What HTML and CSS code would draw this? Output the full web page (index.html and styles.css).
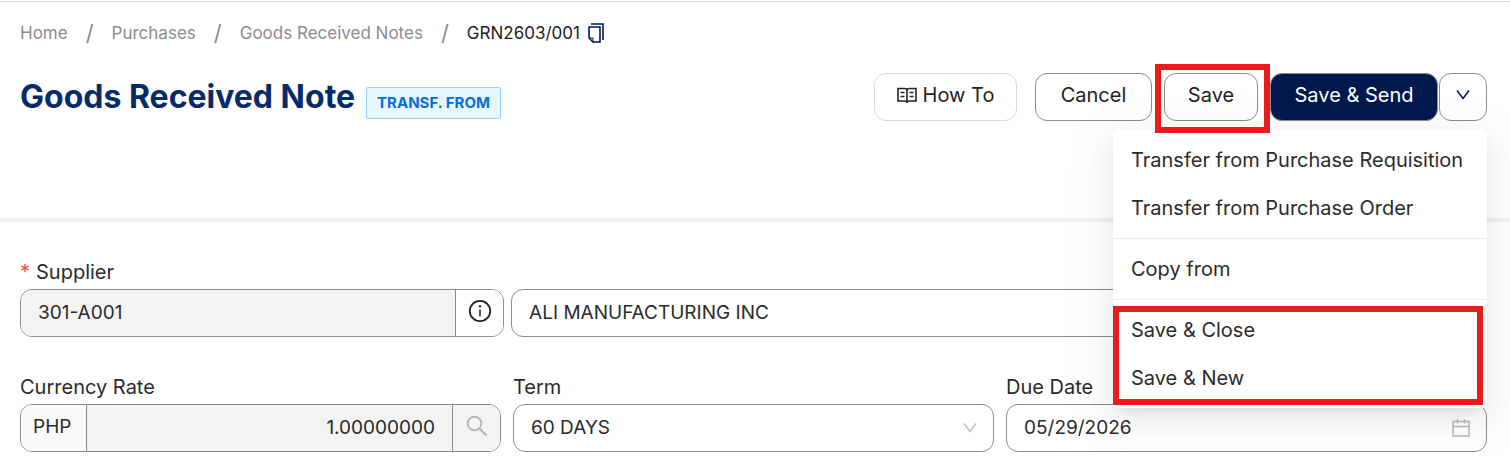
FILE: index.html
```html
<!DOCTYPE html>
<html lang="en">
<head>
  <meta charset="UTF-8">
  <meta name="viewport" content="width=device-width, initial-scale=1.0">
  <title>Goods Received Note</title>
  <link rel="stylesheet" href="styles.css">
</head>
<body>

  <header class="page-header">
    <nav class="breadcrumb" aria-label="Breadcrumb">
      <a href="#">Home</a>
      <span class="slash">/</span>
      <a href="#">Purchases</a>
      <span class="slash">/</span>
      <a href="#">Goods Received Notes</a>
      <span class="slash">/</span>
      <span class="current">GRN2603/001</span>
      <button type="button" class="copy-btn" aria-label="Copy">
        <svg width="16" height="20" viewBox="0 0 16 20" fill="none" stroke="#00194d" stroke-width="1.6">
          <path d="M3 1H15V17"/>
          <path d="M1 4H12V19H5L1 15Z"/>
          <path d="M1 15H5V19" stroke-width="1"/>
        </svg>
      </button>
    </nav>

    <div class="title-row">
      <h1>Goods Received Note</h1>
      <span class="tag">TRANSF. FROM</span>

      <div class="actions">
        <button type="button" class="btn btn-howto">
          <svg width="20" height="17" viewBox="0 0 20 17" fill="none" stroke="#222" stroke-width="1.6">
            <path d="M1 1.5H7.5Q10 1.5 10 3.5Q10 1.5 12.5 1.5H19V14H12.5Q10 14 10 15.5Q10 14 7.5 14H1Z"/>
            <path d="M10 3V16"/>
            <path d="M3.5 5.5H7.5M3.5 9.5H7.5M12.5 5.5H16.5M12.5 9.5H16.5" stroke-width="1.4"/>
          </svg>
          How To
        </button>
        <button type="button" class="btn btn-cancel">Cancel</button>
        <div class="save-wrap">
          <button type="button" class="btn btn-save">Save</button>
          <div class="highlight highlight-save"></div>
        </div>
        <div class="btn-group">
          <button type="button" class="btn btn-primary">Save &amp; Send</button>
          <button type="button" class="btn btn-more" aria-label="More actions">
            <svg width="14" height="10" viewBox="0 0 14 10" fill="none" stroke="#00194d" stroke-width="1.5">
              <path d="M1 0.5L7 8.5L13 0.5"/>
            </svg>
          </button>
        </div>

        <div class="menu">
          <a href="#">Transfer from Purchase Requisition</a>
          <a href="#">Transfer from Purchase Order</a>
          <hr>
          <a href="#">Copy from</a>
          <hr>
          <div class="menu-group">
            <a href="#">Save &amp; Close</a>
            <a href="#">Save &amp; New</a>
            <div class="highlight highlight-group"></div>
          </div>
        </div>
      </div>
    </div>
  </header>

  <form class="form">
    <div class="field">
      <label for="supplier"><span class="required">*</span>Supplier</label>
      <div class="supplier-row">
        <div class="control">
          <input type="text" id="supplier" class="disabled" value="301-A001" readonly>
          <button type="button" class="addon-btn" aria-label="Supplier info">
            <svg width="24" height="24" viewBox="0 0 24 24" fill="none" stroke="#222">
              <circle cx="12" cy="12" r="10.2" stroke-width="1.8"/>
              <path d="M12 10.5V17.5" stroke-width="1.5"/>
              <circle cx="12" cy="7.3" r="1.2" fill="#222" stroke="none"/>
            </svg>
          </button>
        </div>
        <div class="control">
          <input type="text" value="ALI MANUFACTURING INC" aria-label="Supplier name">
        </div>
      </div>
    </div>

    <div class="field-row">
      <div class="field">
        <label for="rate">Currency Rate</label>
        <div class="control">
          <span class="prefix">PHP</span>
          <input type="text" id="rate" class="disabled rate" value="1.00000000" readonly>
          <button type="button" class="addon-btn disabled" aria-label="Search rate">
            <svg width="22" height="22" viewBox="0 0 22 22" fill="none" stroke="#b8b8b8" stroke-width="2">
              <circle cx="8.5" cy="8.5" r="6.8"/>
              <path d="M13.5 13.5L20.5 20.5" stroke-width="2.4"/>
            </svg>
          </button>
        </div>
      </div>

      <div class="field">
        <label for="term">Term</label>
        <div class="control">
          <select id="term">
            <option>60 DAYS</option>
          </select>
          <svg class="suffix" width="14" height="10" viewBox="0 0 14 10" fill="none" stroke="#bfbfbf" stroke-width="1.4">
            <path d="M1 0.5L7 8.5L13 0.5"/>
          </svg>
        </div>
      </div>

      <div class="field">
        <label for="due">Due Date</label>
        <div class="control">
          <input type="text" id="due" value="05/29/2026">
          <svg class="suffix" width="18" height="18" viewBox="0 0 18 18" fill="none" stroke="#b8b8b8" stroke-width="1.5">
            <path d="M1 2.5H17V17H1ZM1 7.5H17M5.5 0V4.5M12.5 0V4.5"/>
          </svg>
        </div>
      </div>
    </div>
  </form>

</body>
</html>
```
FILE: styles.css
```css
* {
  box-sizing: border-box;
}

body {
  margin: 0;
  padding-top: 1px;
  font-family: Inter, sans-serif;
  font-size: 20px;
  color: #2b2b2b;
  background-color: #fff;
}

button,
input,
select {
  font: inherit;
  color: inherit;
}

a {
  color: inherit;
  text-decoration: none;
}

/* Header */
.page-header {
  height: 221px;
  padding: 15px 23px 0 20px;
  border-top: 1px solid #d9d9d9;
  border-bottom: 4px solid #f0f0f0;
}

.breadcrumb {
  display: flex;
  align-items: center;
  height: 32px;
  margin-bottom: 24px;
  font-size: 17px;
  color: #8c8c8c;
}

.slash {
  margin: 0 18px;
  font-size: 22px;
}

.current {
  color: #222;
}

.copy-btn {
  display: flex;
  margin-left: 8px;
  padding: 0;
  border: none;
  background: none;
}

.title-row {
  display: flex;
  align-items: flex-start;
}

h1 {
  margin: 0;
  font-size: 32px;
  line-height: 48px;
  font-weight: 700;
  color: #062b6b;
}

.tag {
  margin: 14px 0 0 11px;
  padding: 0 10px;
  border: 1px solid #91d5ff;
  border-radius: 2px;
  background-color: #e6f7ff;
  color: #096dd9;
  font-size: 15px;
  font-weight: 700;
  line-height: 30px;
}

.actions {
  position: relative;
  display: flex;
  margin-left: auto;
}

.btn {
  display: flex;
  align-items: center;
  justify-content: center;
  gap: 6px;
  height: 48px;
  padding: 0 12px 4px;
  border: 1px solid #8c8c8c;
  border-radius: 12px;
  background-color: transparent;
  color: #222;
}

.btn-howto {
  min-width: 143px;
  margin-right: 18px;
  border-color: #d9d9d9;
}

.btn-cancel {
  min-width: 117px;
  margin-right: 12px;
}

.save-wrap {
  position: relative;
  margin-right: 12px;
}

.btn-save {
  min-width: 94px;
}

.btn-group {
  display: flex;
  gap: 1px;
}

.btn-primary {
  min-width: 168px;
  background-color: #00194d;
  color: #fff;
}

.btn-more {
  width: 48px;
}

/* Dropdown menu */
.menu {
  position: absolute;
  top: 57px;
  right: 0;
  z-index: 1;
  width: 374px;
  padding: 6px 0;
  border-radius: 4px;
  background-color: #fff;
  box-shadow: 0 6px 12px -8px rgba(0, 0, 0, 0.14), 0 9px 28px rgba(0, 0, 0, 0.07), 0 12px 48px 16px rgba(0, 0, 0, 0.03);
}

.menu a {
  display: block;
  padding: 0 18px;
  line-height: 48px;
  white-space: nowrap;
}

.menu hr {
  height: 1px;
  margin: 6px 0;
  border: none;
  background-color: #ececec;
}

.menu-group {
  position: relative;
}

.highlight {
  position: absolute;
  border: 6px solid #e81c1c;
  pointer-events: none;
}

.highlight-save {
  inset: -9px -12px -12px -9px;
  z-index: 2;
}

.highlight-group {
  inset: 0 4px -3px 0;
}

/* Form */
.form {
  padding: 35px 23px 0 20px;
}

.field label {
  display: block;
  margin-bottom: 2px;
  line-height: 30px;
}

.required {
  margin-right: 6px;
  color: #ff4d4f;
}

.supplier-row {
  display: grid;
  grid-template-columns: 33% 1fr;
  gap: 7px;
}

.field-row {
  display: grid;
  grid-template-columns: repeat(3, 1fr);
  gap: 12px;
  margin-top: 35px;
}

.control {
  display: flex;
  align-items: center;
  height: 48px;
  border: 1px solid #8c8c8c;
  border-radius: 12px;
  font-size: 19px;
  overflow: hidden;
}

.control input,
.control select {
  flex: 1;
  min-width: 0;
  height: 100%;
  padding: 0 17px 2px;
  border: none;
  outline: none;
  appearance: none;
  background-color: transparent;
}

.control .disabled {
  background-color: #f4f4f4;
}

.control .rate {
  text-align: right;
}

.prefix {
  height: 100%;
  padding: 0 15px 0 12px;
  border-right: 1px solid #8c8c8c;
  background-color: #fafafa;
  line-height: 44px;
}

.addon-btn {
  display: flex;
  align-items: center;
  justify-content: center;
  width: 48px;
  height: 100%;
  padding: 0 0 4px;
  border: none;
  border-left: 1px solid #8c8c8c;
  background-color: #fff;
}

.suffix {
  margin-right: 16px;
}
```
